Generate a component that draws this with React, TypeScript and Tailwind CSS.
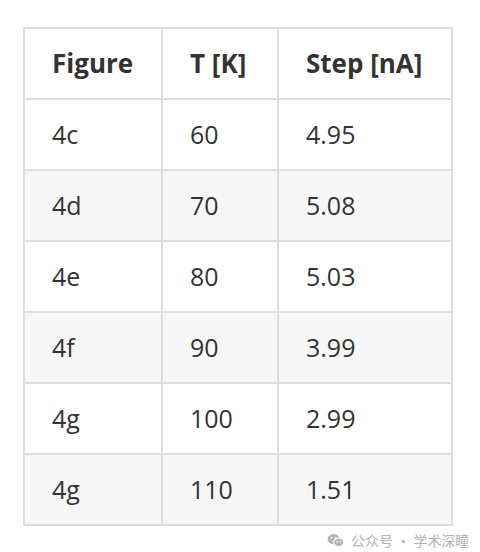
import React from "react";

const rows = [
  { fig: "4c", t: "60", step: "4.95" },
  { fig: "4d", t: "70", step: "5.08" },
  { fig: "4e", t: "80", step: "5.03" },
  { fig: "4f", t: "90", step: "3.99" },
  { fig: "4g", t: "100", step: "2.99" },
  { fig: "4g", t: "110", step: "1.51" },
];

function WeChatIcon() {
  return (
    <svg width="18" height="15" viewBox="0 0 19 16" className="shrink-0">
      <ellipse cx="7" cy="6.5" rx="6.5" ry="5.5" fill="#b5b5b5" />
      <ellipse cx="12.5" cy="10" rx="5.5" ry="4.7" fill="#b5b5b5" stroke="#fff" strokeWidth="1.2" />
      <circle cx="4.8" cy="5" r="0.9" fill="#fff" />
      <circle cx="9" cy="5" r="0.9" fill="#fff" />
      <circle cx="10.8" cy="9.2" r="0.75" fill="#fff" />
      <circle cx="14.3" cy="9.2" r="0.75" fill="#fff" />
    </svg>
  );
}

export default function App() {
  const cell = "border-2 border-[#dedede] pl-[27px] text-left align-middle";
  return (
    <div
      className="w-[480px] h-[552px] bg-white text-[#333] overflow-hidden"
      style={{ fontFamily: '"Open Sans", "Noto Sans", sans-serif' }}
    >
      <div className="pt-[27px] pl-[23px]">
        <table className="border-collapse text-[25px]">
          <thead>
            <tr className="h-[71px] text-[26px]">
              <th className={`${cell} w-[138px] font-bold`}>Figure</th>
              <th className={`${cell} w-[116px] font-bold`}>T [K]</th>
              <th className={`${cell} w-[174px] font-bold`}>Step [nA]</th>
            </tr>
          </thead>
          <tbody>
            {rows.map((r, i) => (
              <tr key={i} className={`h-[71px] ${i % 2 === 1 ? "bg-[#f7f7f7]" : "bg-white"}`}>
                <td className={cell}>{r.fig}</td>
                <td className={cell}>{r.t}</td>
                <td className={cell}>{r.step}</td>
              </tr>
            ))}
          </tbody>
        </table>
      </div>

      {/* watermark */}
      <div
        className="flex items-center gap-[6px] pl-[327px] mt-[4px] text-[14px] text-[#b3b3b3]"
        style={{ fontFamily: '"Noto Sans CJK SC", sans-serif' }}
      >
        <WeChatIcon />
        <span>公众号 · 学术深瞳</span>
      </div>
    </div>
  );
}
